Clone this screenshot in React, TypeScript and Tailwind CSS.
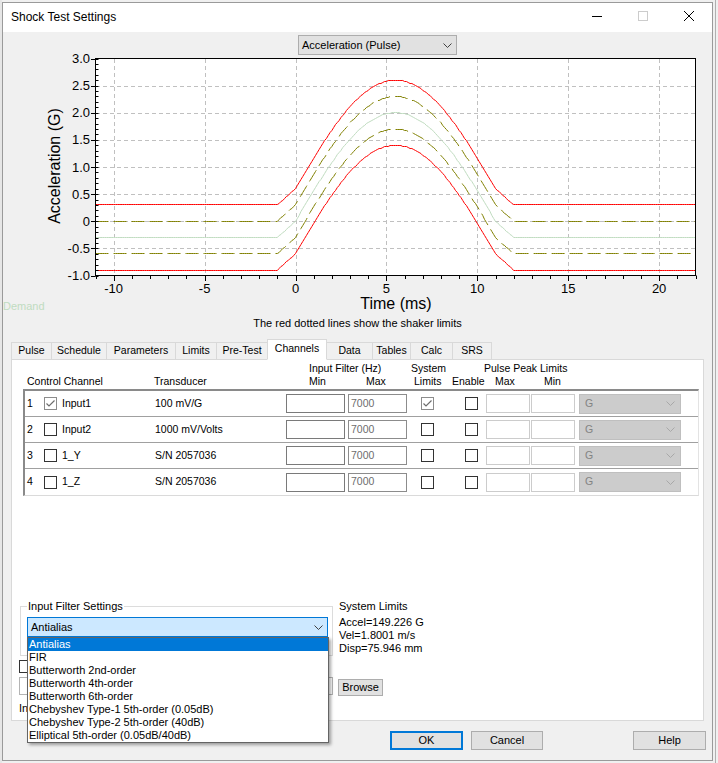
import React from "react";

const F = "font-['Liberation_Sans',Arial,sans-serif]";

const X = (t: number) => 95.5 + ((t + 11) * 600) / 33;
const Y = (v: number) => 58.5 + ((3 - v) * 217) / 4;

function demand(t: number) {
  if (t <= -1) return -0.3;
  if (t < 0) return -0.3 + 0.3 * (t + 1);
  if (t <= 11) return 2 * Math.sin((Math.PI * t) / 11);
  if (t < 12) return -0.3 * (t - 11);
  return -0.3;
}

function curve(off: number) {
  const pts: string[] = [];
  for (let i = 0; i <= 330; i++) {
    const t = -11 + i / 10;
    const y = Math.floor(Y(demand(t) + off) + 1e-6) + 0.5;
    pts.push(`${X(t).toFixed(2)},${y}`);
  }
  return "M" + pts.join(" L");
}

function Chevron({ color = "#333333" }: { color?: string }) {
  return (
    <svg width="9" height="5" viewBox="0 0 9 5" className="block">
      <polyline points="0.5,0.5 4.5,4.5 8.5,0.5" fill="none" stroke={color} strokeWidth="1" />
    </svg>
  );
}

function Check({ checked }: { checked?: boolean }) {
  return (
    <div
      className={`w-[13px] h-[13px] shrink-0 border bg-white flex items-center justify-center ${
        checked ? "border-[#8c8c8c]" : "border-[#333333]"
      }`}
    >
      {checked && (
        <svg width="11" height="11" viewBox="0 0 11 11" className="block">
          <polyline points="1.5,5.5 4,8 9.5,2.5" fill="none" stroke="#6d6d6d" strokeWidth="1.2" />
        </svg>
      )}
    </div>
  );
}

function Chart() {
  const xt = [-10, -5, 0, 5, 10, 15, 20];
  const yt = [3, 2.5, 2, 1.5, 1, 0.5, 0, -0.5, -1];
  const minorY: number[] = [];
  for (let i = -10; i <= 30; i++) minorY.push(i / 10);
  const minorX: number[] = [];
  for (let i = -11; i <= 22; i++) minorX.push(i);
  const fmtY = (v: number) => (v === 0 ? "0" : v.toFixed(1));
  return (
    <svg width="709" height="260" viewBox="3 55 709 260" className="block shrink-0 overflow-visible">
      <rect x="95.5" y="58.5" width="600" height="217" fill="#ffffff" />
      {xt.map((t) => (
        <line key={"gx" + t} x1={Math.round(X(t)) + 0.5} y1={59} x2={Math.round(X(t)) + 0.5} y2={275} stroke="#c0c0c0" strokeDasharray="4 3" />
      ))}
      {yt.slice(1, -1).map((v) => (
        <line key={"gy" + v} x1={96} y1={Math.round(Y(v)) + 0.5} x2={695} y2={Math.round(Y(v)) + 0.5} stroke="#c0c0c0" strokeDasharray="4 3" />
      ))}
      <path d={curve(0)} fill="none" stroke="#c0dcc0" strokeWidth="1" />
      <path d={curve(0.3)} fill="none" stroke="#808000" strokeWidth="1" strokeDasharray="13 5" />
      <path d={curve(-0.3)} fill="none" stroke="#808000" strokeWidth="1" strokeDasharray="13 5" />
      <path d={curve(0.6)} fill="none" stroke="#ff0000" strokeWidth="1" />
      <path d={curve(-0.6)} fill="none" stroke="#ff0000" strokeWidth="1" />
      <rect x="95.5" y="58.5" width="600" height="217" fill="none" stroke="#000000" strokeWidth="1" />
      {minorY.map((v) => (
        <line key={"my" + v} x1={95.5} y1={Math.round(Y(v)) + 0.5} x2={98.5} y2={Math.round(Y(v)) + 0.5} stroke="#000" />
      ))}
      {yt.map((v) => (
        <line key={"My" + v} x1={91} y1={Math.round(Y(v)) + 0.5} x2={95.5} y2={Math.round(Y(v)) + 0.5} stroke="#000" />
      ))}
      {minorX.map((t) => (
        <line
          key={"mx" + t}
          x1={Math.round(X(t)) + 0.5}
          y1={275.5}
          x2={Math.round(X(t)) + 0.5}
          y2={t % 5 === 0 ? 281 : 279}
          stroke="#000"
        />
      ))}
      {yt.map((v) => (
        <text
          key={"ly" + v}
          x={90}
          y={Y(v)}
          textAnchor="end"
          dominantBaseline="central"
          fontSize="13"
          fontFamily="Liberation Sans, Arial, sans-serif"
          fill="#000"
        >
          {fmtY(v)}
        </text>
      ))}
      {xt.map((t) => (
        <text
          key={"lx" + t}
          x={X(t)}
          y={288}
          textAnchor="middle"
          dominantBaseline="central"
          fontSize="13"
          fontFamily="Liberation Sans, Arial, sans-serif"
          fill="#000"
        >
          {t}
        </text>
      ))}
      <text x={396} y={303} textAnchor="middle" dominantBaseline="central" fontSize="16" fontFamily="Liberation Sans, Arial, sans-serif" fill="#000">
        Time (ms)
      </text>
      <text
        x={54}
        y={166}
        textAnchor="middle"
        dominantBaseline="central"
        fontSize="16"
        fontFamily="Liberation Sans, Arial, sans-serif"
        fill="#000"
        transform="rotate(-90 54 166)"
      >
        Acceleration (G)
      </text>
      <text x={3} y={306} dominantBaseline="central" fontSize="11" fontFamily="Liberation Sans, Arial, sans-serif" fill="#c0dcc0">
        Demand
      </text>
    </svg>
  );
}

const tabs: [string, number][] = [
  ["Pulse", 41],
  ["Schedule", 56],
  ["Parameters", 70],
  ["Limits", 42],
  ["Pre-Test", 52],
  ["Channels", 60],
  ["Data", 47],
  ["Tables", 39],
  ["Calc", 43],
  ["SRS", 40],
];

const rows = [
  { n: "1", name: "Input1", tr: "100 mV/G", c: true, s: true },
  { n: "2", name: "Input2", tr: "1000 mV/Volts", c: false, s: false },
  { n: "3", name: "1_Y", tr: "S/N 2057036", c: false, s: false },
  { n: "4", name: "1_Z", tr: "S/N 2057036", c: false, s: false },
];

const filters = [
  "Antialias",
  "FIR",
  "Butterworth 2nd-order",
  "Butterworth 4th-order",
  "Butterworth 6th-order",
  "Chebyshev Type-1 5th-order (0.05dB)",
  "Chebyshev Type-2 5th-order (40dB)",
  "Elliptical 5th-order (0.05dB/40dB)",
];

export default function App() {
  return (
    <div className={`w-[718px] h-[763px] bg-[#f0f0f0] flex ${F} text-black overflow-hidden`}>
      <div className="w-[2px] shrink-0 bg-[#e6e6e6]" />
      <div className="w-[711px] h-[759px] mt-[2px] shrink-0 border border-[#9a9a9a] bg-[#f0f0f0] flex flex-col">
        {/* title bar */}
        <div className="h-[29px] shrink-0 bg-white flex items-center">
          <div className="pl-[8px] pb-[1px] text-[12px] leading-[14px]">Shock Test Settings</div>
          <div className="ml-auto flex h-full">
            <div className="w-[46px] h-full flex items-center justify-center pb-[3px]">
              <svg width="10" height="10" viewBox="0 0 10 10" className="block">
                <line x1="0" y1="5.5" x2="10" y2="5.5" stroke="#000" />
              </svg>
            </div>
            <div className="w-[46px] h-full flex items-center justify-center pb-[3px]">
              <svg width="10" height="10" viewBox="0 0 10 10" className="block">
                <rect x="0.5" y="0.5" width="9" height="9" fill="none" stroke="#cccccc" />
              </svg>
            </div>
            <div className="w-[46px] h-full flex items-center justify-center pb-[3px]">
              <svg width="10" height="10" viewBox="0 0 10 10" className="block">
                <path d="M0,0 L10,10 M10,0 L0,10" stroke="#000" strokeWidth="1" />
              </svg>
            </div>
          </div>
        </div>

        {/* select */}
        <div className="mt-[3px] ml-[295px] w-[159px] h-[20px] shrink-0 bg-[#e1e1e1] border border-[#adadad] flex items-center pl-[3px] pr-[4px] text-[11px]">
          <span>Acceleration (Pulse)</span>
          <span className="ml-auto">
            <Chevron color="#404040" />
          </span>
        </div>

        <Chart />

        <div className="h-[17px] leading-[17px] shrink-0 text-[11px] text-center">The red dotted lines show the shaker limits</div>

        {/* tabs */}
        <div className="mt-[7px] h-[20px] shrink-0 flex items-end pl-[8px] text-[10.5px] relative z-10">
          {tabs.map(([label, w], i) => {
            const sel = label === "Channels";
            return (
              <div
                key={label}
                style={{ width: w }}
                className={`${i > 0 ? "-ml-[1px]" : ""} border border-[#d9d9d9] flex items-center justify-center ${
                  sel ? "h-[21px] -mb-[1px] bg-white border-b-white relative z-10 pb-[2px]" : "h-[18px] -mb-[1px] bg-[#f0f0f0]"
                }`}
              >
                {label}
              </div>
            );
          })}
        </div>

        {/* panel */}
        <div className="ml-[8px] w-[693px] h-[362px] shrink-0 bg-white border border-[#d9d9d9] flex flex-col text-[10.5px]">
          <div className="pt-[2px]">
            <div className="flex h-[13px] leading-[13px]">
              <div className="w-[297px] shrink-0" />
              <div className="w-[102px] shrink-0">Input Filter (Hz)</div>
              <div className="w-[73px] shrink-0">System</div>
              <div className="shrink-0">Pulse Peak Limits</div>
            </div>
            <div className="flex h-[13px] leading-[13px]">
              <div className="w-[15px] shrink-0" />
              <div className="w-[127px] shrink-0">Control Channel</div>
              <div className="w-[155px] shrink-0">Transducer</div>
              <div className="w-[57px] shrink-0">Min</div>
              <div className="w-[48px] shrink-0">Max</div>
              <div className="w-[38px] shrink-0">Limits</div>
              <div className="w-[43px] shrink-0">Enable</div>
              <div className="w-[49px] shrink-0">Max</div>
              <div className="shrink-0">Min</div>
            </div>
          </div>

          {/* grid box */}
          <div className="mt-[1px] ml-[11px] w-[676px] shrink-0 border-t-2 border-l-2 border-r border-b border-t-[#8a8a8a] border-l-[#8a8a8a] border-r-[#e3e3e3] border-b-[#dadada]">
            {rows.map((r, i) => (
              <div key={r.n} className={`flex items-center h-[26px] ${i < 3 ? "border-b border-[#a0a0a0]" : "h-[25px]"}`}>
                <div className="w-[19px] pl-[2px] shrink-0">{r.n}</div>
                <Check checked={r.c} />
                <div className="ml-[5px] w-[93px] shrink-0">{r.name}</div>
                <div className="w-[131px] shrink-0">{r.tr}</div>
                <div className="w-[59px] h-[19px] shrink-0 border border-[#7a7a7a] bg-white" />
                <div className="ml-[3px] w-[59px] h-[19px] shrink-0 border border-[#8c8c8c] bg-white pl-[2px] flex items-center text-[#6d6d6d]">
                  7000
                </div>
                <div className="ml-[14px] shrink-0">
                  <Check checked={r.s} />
                </div>
                <div className="ml-[31px] shrink-0">
                  <Check />
                </div>
                <div className="ml-[8px] w-[44px] h-[19px] shrink-0 border border-[#cccccc] bg-white" />
                <div className="ml-[1px] w-[44px] h-[19px] shrink-0 border border-[#cccccc] bg-white" />
                <div className="ml-[4px] w-[102px] h-[20px] shrink-0 border border-[#bfbfbf] bg-[#cccccc] flex items-center pl-[5px] pr-[5px] text-[#838383]">
                  <span>G</span>
                  <span className="ml-auto">
                    <Chevron color="#a8a8a8" />
                  </span>
                </div>
              </div>
            ))}
          </div>

          {/* bottom region */}
          <div className="mt-[104px] flex text-[11px]">
            <div className="ml-[7px] w-[314px] shrink-0 flex flex-col">
              <fieldset className="ml-[1px] w-[313px] border border-[#dcdcdc] pl-[6px] pr-[4px] pb-[18px]">
                <legend className="px-[1px] h-[13px] leading-[13px]">Input Filter Settings</legend>
                <div className="mt-[4px] w-[301px] h-[20px] relative border border-[#0078d7] bg-[#cce8ff] flex items-center pl-[3px] pr-[4px]">
                  <span>Antialias</span>
                  <span className="ml-auto">
                    <Chevron color="#404040" />
                  </span>
                  <div className="absolute -left-[1px] top-[19px] w-[302px] bg-white border border-[#646464] z-20 shadow-[2px_2px_3px_rgba(0,0,0,0.35)] py-0">
                    {filters.map((f, i) => (
                      <div
                        key={f}
                        className={`h-[13px] leading-[13px] pl-[1px] whitespace-nowrap ${i === 0 ? "bg-[#0078d7] text-white" : ""}`}
                      >
                        {f}
                      </div>
                    ))}
                  </div>
                </div>
              </fieldset>
              <div className="mt-[4px]">
                <Check />
              </div>
              <div className="mt-[4px] w-[314px] h-[18px] border border-[#b4b4b4] bg-white" />
              <div className="mt-[7px] h-[13px] leading-[13px]">In</div>
            </div>
            <div className="ml-[6px] flex flex-col">
              <div className="h-[13px] leading-[13px]">System Limits</div>
              <div className="mt-[3px] h-[13px] leading-[13px]">Accel=149.226 G</div>
              <div className="h-[13px] leading-[13px]">Vel=1.8001 m/s</div>
              <div className="h-[13px] leading-[13px]">Disp=75.946 mm</div>
              <div className="mt-[24px] -ml-[1px] w-[45px] h-[17px] border border-[#adadad] bg-[#e1e1e1] flex items-center justify-center">
                Browse
              </div>
            </div>
          </div>
        </div>

        {/* buttons */}
        <div className="mt-[10px] h-[19px] shrink-0 flex text-[11px]">
          <div className="ml-[387px] w-[73px] h-[19px] border-2 border-[#0078d7] bg-[#e1e1e1] flex items-center justify-center">OK</div>
          <div className="ml-[8px] w-[72px] h-[19px] border border-[#adadad] bg-[#e1e1e1] flex items-center justify-center">Cancel</div>
          <div className="ml-[90px] w-[73px] h-[19px] border border-[#adadad] bg-[#e1e1e1] flex items-center justify-center">Help</div>
        </div>
      </div>
      <div className="w-[5px] shrink-0 bg-[#f0f0f0] flex">
        <div className="ml-[2px] w-[1px] h-full bg-[#b0b0b0]" />
      </div>
    </div>
  );
}
